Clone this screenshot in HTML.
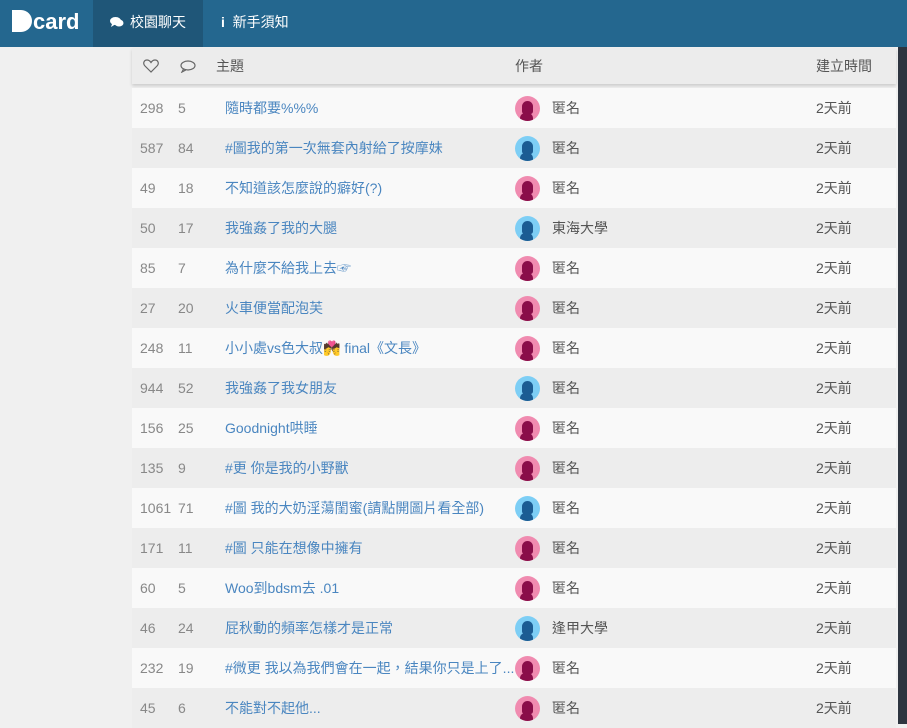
<!DOCTYPE html>
<html><head><meta charset="utf-8"><style>
*{margin:0;padding:0;box-sizing:border-box}
body{width:907px;height:724px;overflow:hidden;background:#f0f0f0;font-family:"Liberation Sans","Noto Sans CJK TC",sans-serif;position:relative}
.nav{position:absolute;left:0;top:0;width:907px;height:47px;background:#24678f}
.logo{position:absolute;left:12px;top:9px;color:#fff;font-size:22px;font-weight:bold}
.logo .d{display:inline-block;width:20px;height:22px;background:#fff;border-radius:0 11px 11px 0;vertical-align:-3px;position:relative;margin-right:1px}
.tab{position:absolute;top:0;height:47px;line-height:44px;color:#fff;font-size:14px}
.t1{left:93px;width:110px;background:#1f5678;padding-left:17px}
.t2{left:203px;padding-left:18px}
.sb{position:absolute;left:898px;top:47px;width:9px;height:677px;background:#2e3540}
.hdr{position:absolute;left:132px;top:48px;width:764px;height:36px;background:#ececec;box-shadow:0 2px 3px rgba(0,0,0,.15);font-size:14px;color:#555}
.hdr span{position:absolute;top:8px}
.row{position:absolute;left:132px;width:764px;height:40px;font-size:14px;color:#888;line-height:40px}
.row span{position:absolute;top:0}
.row .t{left:93px;color:#4a86c0}
.row .a{left:420px;color:#555}
.row .tm{left:684px;color:#555}
.av{position:absolute;left:383px;top:8px;width:25px;height:25px;border-radius:50%;overflow:hidden}
.f{background:#f08bb0}.m{background:#7dcef5}
.av i{position:absolute;left:7px;top:5px;width:11px;height:13px;border-radius:6px 6px 3px 3px}
.f i{background:#8a0d49}.m i{background:#1b5c93}
.av b{position:absolute;left:5px;top:17px;width:13px;height:10px;border-radius:5px 5px 0 0}
.f b{background:#8a0d49}.m b{background:#1b5c93}
</style></head><body>
<div class="nav">
<div class="logo"><span class="d"></span>card</div>
<div class="tab t1"><svg width="14" height="12" viewBox="0 0 14 12" style="vertical-align:-1px;margin-right:6px"><ellipse cx="5.5" cy="5" rx="5.5" ry="4" fill="#fff"/><ellipse cx="9" cy="7" rx="4.5" ry="3.5" fill="#fff"/><path d="M2 8 L1 11 L5 8.5Z" fill="#fff"/></svg>校園聊天</div>
<div class="tab t2"><b>i</b>&nbsp; 新手須知</div>
</div>
<div class="sb"></div>
<div class="hdr">
<svg style="position:absolute;left:11px;top:11px" width="16" height="14" viewBox="0 0 16 14"><path d="M8 13 L2 7 C-0.5 4.5 1 1 4 1 C6 1 7.2 2.3 8 3.5 C8.8 2.3 10 1 12 1 C15 1 16.5 4.5 14 7Z" fill="none" stroke="#666" stroke-width="1.2"/></svg>
<svg style="position:absolute;left:48px;top:12px" width="16" height="13" viewBox="0 0 16 13"><ellipse cx="8" cy="5.5" rx="7" ry="4.5" fill="none" stroke="#666" stroke-width="1.2"/><path d="M3.5 9 L2 12 L6 9.8" fill="none" stroke="#666" stroke-width="1.2"/></svg>
<span style="left:84px">主題</span>
<span style="left:383px">作者</span>
<span style="left:684px">建立時間</span>
</div>
<div id="rows"></div>
<script>
var d=[["298","5","隨時都要%%%","f","匿名"],["587","84","#圖我的第一次無套內射給了按摩妹","m","匿名"],["49","18","不知道該怎麼說的癖好(?)","f","匿名"],["50","17","我強姦了我的大腿","m","東海大學"],["85","7","為什麼不給我上去☞","f","匿名"],["27","20","火車便當配泡芙","f","匿名"],["248","11","小小處vs色大叔💏 final《文長》","f","匿名"],["944","52","我強姦了我女朋友","m","匿名"],["156","25","Goodnight哄睡","f","匿名"],["135","9","#更 你是我的小野獸","f","匿名"],["1061","71","#圖 我的大奶淫蕩閨蜜(請點開圖片看全部)","m","匿名"],["171","11","#圖 只能在想像中擁有","f","匿名"],["60","5","Woo到bdsm去 .01","f","匿名"],["46","24","屁秋動的頻率怎樣才是正常","m","逢甲大學"],["232","19","#微更 我以為我們會在一起，結果你只是上了...","f","匿名"],["45","6","不能對不起他...","f","匿名"]];
var h="";d.forEach(function(r,i){h+='<div class="row" style="top:'+(88+i*40)+'px;background:'+(i%2?'#ededed':'#f9f9f9')+'"><span style="left:8px">'+r[0]+'</span><span style="left:46px">'+r[1]+'</span><span class="t">'+r[2]+'</span><div class="av '+r[3]+'"><i></i><b></b></div><span class="a">'+r[4]+'</span><span class="tm">2天前</span></div>'});
document.getElementById("rows").innerHTML=h;
</script>
</body></html>
